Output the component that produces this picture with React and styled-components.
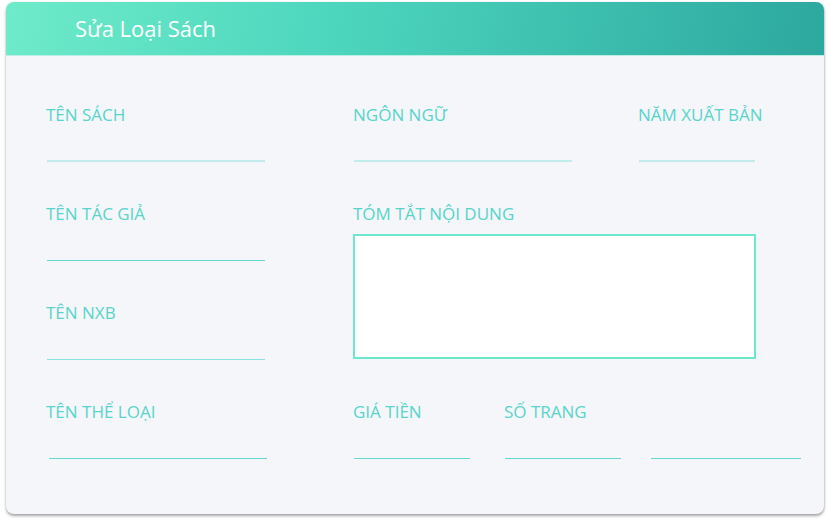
import React from 'react';
import styled, { createGlobalStyle } from 'styled-components';

const Global = createGlobalStyle`
  html, body {
    margin: 0;
    padding: 0;
    background: #ffffff;
  }
  body {
    font-family: "Open Sans", "Noto Sans", sans-serif;
  }
`;

function App() {
  return (
    <>
      <Global />
      <Page>
        <Card>
          <Header>
            <Title>Sửa Loại Sách</Title>
          </Header>
          <Body>
            <Row cols="307px 285px 116px">
              <Field>
                <Label>Tên sách</Label>
                <Line w={218} light />
              </Field>
              <Field>
                <Label>Ngôn ngữ</Label>
                <Line w={218} light />
              </Field>
              <Field>
                <Label>Năm xuất bản</Label>
                <Line w={116} light />
              </Field>
            </Row>
            <Middle>
              <Stack>
                <Field>
                  <Label>Tên tác giả</Label>
                  <Line w={218} />
                </Field>
                <Field>
                  <Label>Tên NXB</Label>
                  <Line w={218} soft />
                </Field>
              </Stack>
              <Field>
                <Label>Tóm tắt nội dung</Label>
                <Summary />
              </Field>
            </Middle>
            <Row cols="307px 151px 146px 150px">
              <Field>
                <Label>Tên thể loại</Label>
                <Line w={218} shift={2} />
              </Field>
              <Field>
                <Label>Giá tiền</Label>
                <Line w={116} />
              </Field>
              <Field>
                <Label>Số trang</Label>
                <Line w={116} />
              </Field>
              <Field>
                <Label>&nbsp;</Label>
                <Line w={150} />
              </Field>
            </Row>
          </Body>
        </Card>
      </Page>
    </>
  );
}

const Page = styled.div`
  padding: 2px 6px 9px 6px;
`;
const Card = styled.div`
  width: 818px;
  height: 512px;
  box-sizing: border-box;
  background: #f5f6fa;
  border-radius: 8px;
  box-shadow: 0 2px 3px rgba(0, 0, 0, 0.35), 1px 0 2px rgba(0, 0, 0, 0.08);
  overflow: hidden;
`;
const Header = styled.div`
  height: 54px;
  display: flex;
  align-items: center;
  padding-left: 69px;
  background: linear-gradient(100deg, #6eebc9 0%, #4dd6be 40%, #2da89f 100%);
  border-bottom: 1px solid #bdeee4;
  box-sizing: border-box;
`;
const Title = styled.h1`
  margin: 0 0 2px 0;
  color: #ffffff;
  font-size: 22px;
  font-weight: 400;
`;
const Body = styled.div`
  padding: 49px 0 0 40px;
  display: flex;
  flex-direction: column;
  gap: 42px;
`;
const Row = styled.div`
  display: grid;
  grid-template-columns: ${p => p.cols};
`;
const Middle = styled.div`
  display: grid;
  grid-template-columns: 307px 403px;
  align-items: start;
`;
const Stack = styled.div`
  display: flex;
  flex-direction: column;
  gap: 42px;
`;
const Field = styled.div`
  display: flex;
  flex-direction: column;
  white-space: nowrap;
`;
const Label = styled.label`
  color: #58d5ca;
  font-size: 17px;
  line-height: 20px;
  text-transform: uppercase;
`;
const Line = styled.div`
  width: ${p => p.w}px;
  height: 37px;
  margin-left: ${p => (p.shift || 0) + 1}px;
  border-bottom: ${p => (p.light ? '2px solid #c2eceb' : p.soft ? '1.5px solid #86e3dd' : '1.5px solid #64d8ce')};
  box-sizing: border-box;
`;
const Summary = styled.div`
  margin-top: 10px;
  width: 403px;
  height: 125px;
  box-sizing: border-box;
  background: #ffffff;
  border: 2px solid #6ee8cc;
`;

export default App;
